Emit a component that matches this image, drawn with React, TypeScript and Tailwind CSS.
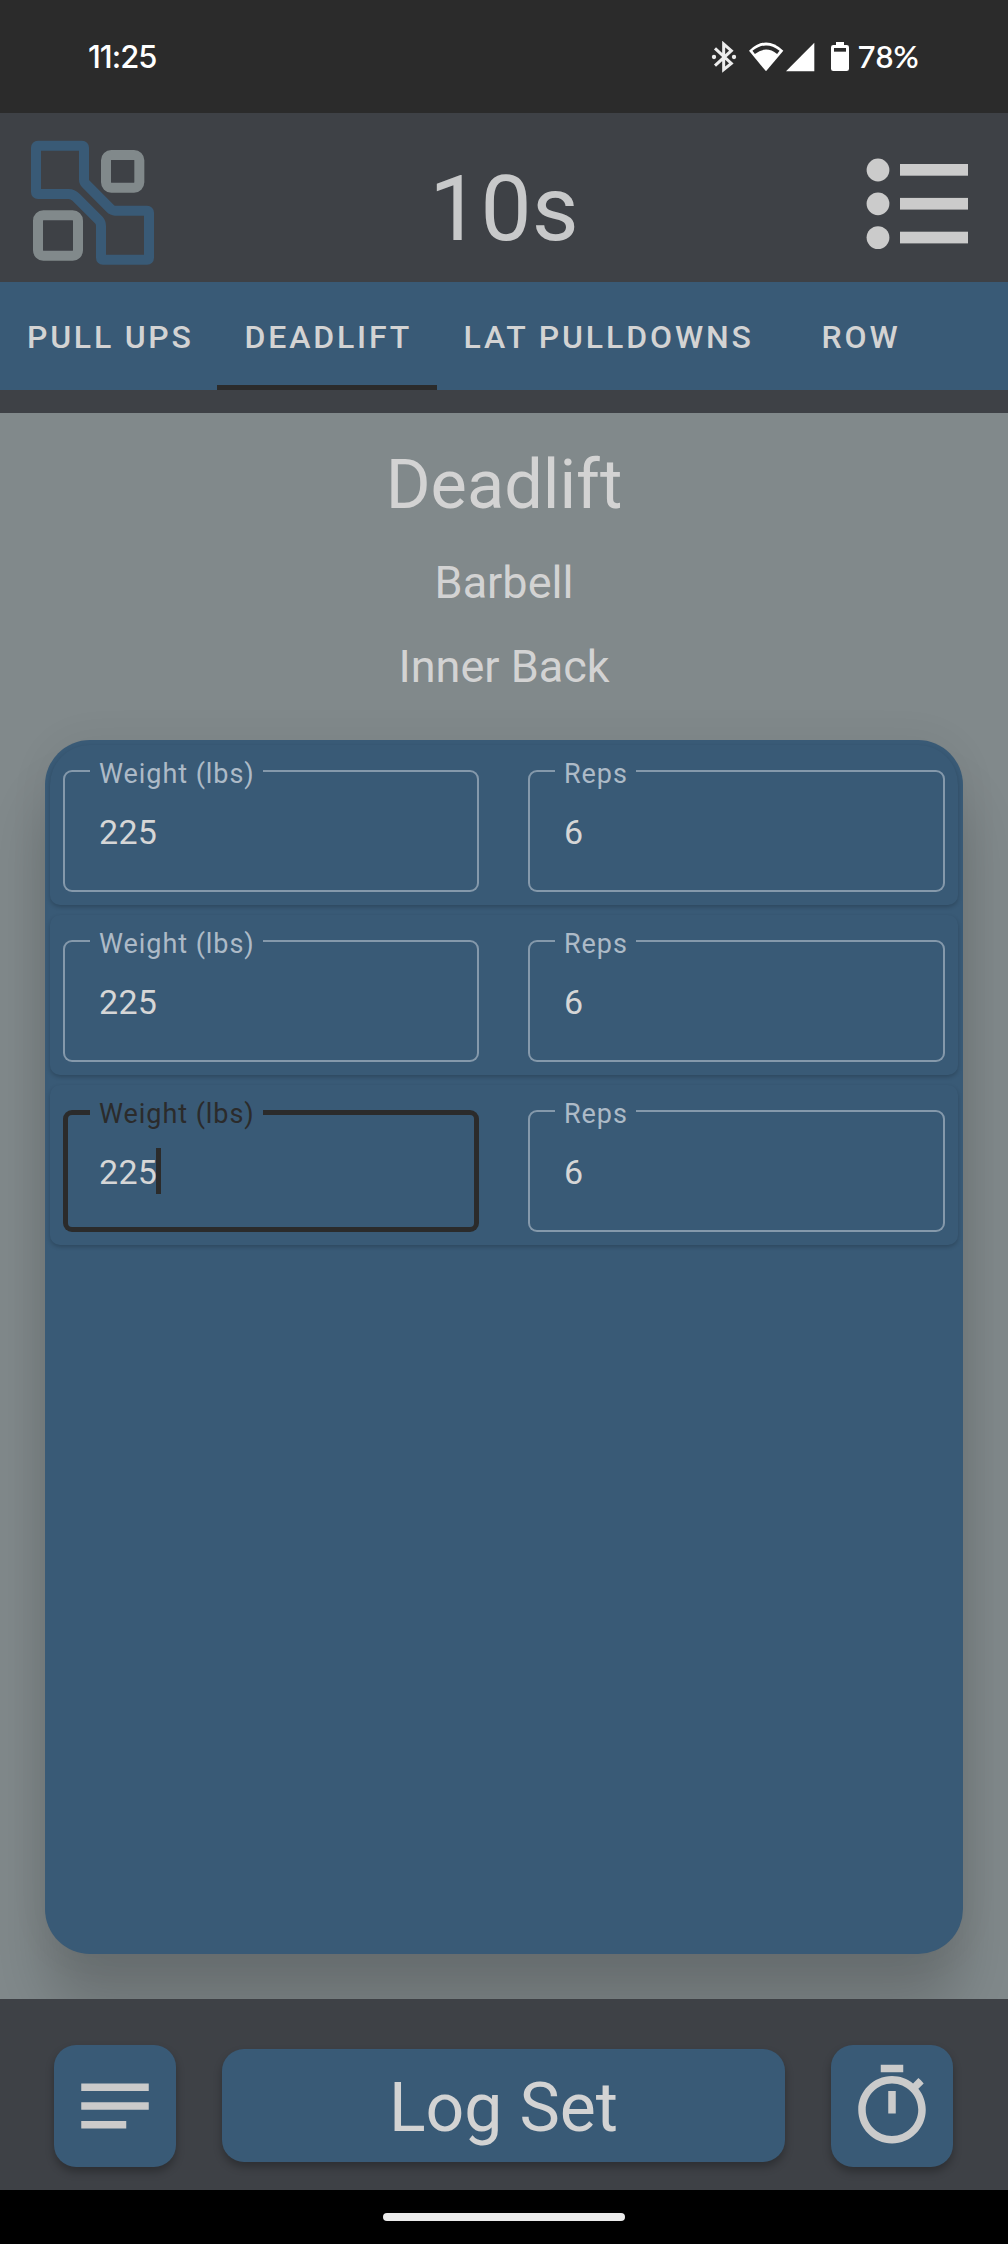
type FieldProps = { label: string; value: string; labelWidth: string; width: string; focused?: boolean };

const tabs = [
  { name: 'PULL UPS', box: 'w-[217px] pl-[27px] tracking-[2.75px]' },
  { name: 'DEADLIFT', box: 'w-[220px] pl-[27.5px] tracking-[2.85px]', active: true },
  { name: 'LAT PULLDOWNS', box: 'w-[345px] pl-[26.5px] tracking-[2.9px]' },
  { name: 'ROW', box: 'w-[226px] pl-[39.5px] tracking-[2.9px]' },
];

const sets = [
  { weight: '225', reps: '6' },
  { weight: '225', reps: '6' },
  { weight: '225', reps: '6', focused: true },
];

function Logo() {
  return (
    <svg width="123" height="125" viewBox="93 420 369 375" fill="none" strokeWidth="30">
      <path
        stroke="#395a76"
        strokeLinejoin="round"
        d="M114 437H246Q252 437 252 443V538Q252 546 257 551L330 625Q337 632 345 632H441Q447 632 447 638V773Q447 779 441 779H309Q303 779 303 773V678Q303 668 297 661L228 592Q218 582 206 582H114Q108 582 108 576V443Q108 437 114 437Z"
      />
      <rect x="318" y="465" width="100" height="98" rx="16" stroke="#81898b" />
      <rect x="114" y="646" width="120" height="121" rx="16" stroke="#81898b" />
    </svg>
  );
}

function StatusIcons() {
  return (
    <>
      <svg className="absolute left-[711px] top-[41px]" width="27" height="32" viewBox="621 123 81 96">
        <path d="M633 145L682 190L659 209V132L682 152L633 197" fill="none" stroke="#ececec" strokeWidth="9" />
        <circle cx="630" cy="171" r="6.5" fill="#ececec" />
        <circle cx="690" cy="171" r="6.5" fill="#ececec" />
      </svg>
      <svg className="absolute left-[748px] top-[41px]" width="36" height="32" viewBox="732 123 108 96">
        <path d="M735 152Q786 103 838 152L786 214Z" fill="#fff" />
        <path d="M749 157Q786 128 823 157" fill="none" stroke="#2b2b2b" strokeWidth="12" />
      </svg>
      <svg className="absolute left-[785px] top-[41px]" width="31" height="32" viewBox="843 123 93 96">
        <path d="M846 214H931V128Z" fill="#fff" />
      </svg>
      <svg className="absolute left-[830px] top-[41px]" width="20" height="32" viewBox="978 123 60 96">
        <rect x="996" y="126" width="24" height="12" fill="#fff" />
        <rect x="981" y="135" width="54" height="78" rx="7" fill="#fff" />
        <rect x="990" y="144" width="36" height="11" fill="#2b2b2b" />
      </svg>
    </>
  );
}

function ListIcon() {
  return (
    <svg width="102" height="92" viewBox="0 0 102 92" fill="#cbcbcb">
      <circle cx="12" cy="12" r="11.4" />
      <circle cx="12" cy="45.8" r="11.4" />
      <circle cx="12" cy="79.6" r="11.4" />
      <rect x="34" y="6" width="68" height="11.7" />
      <rect x="34" y="39.9" width="68" height="11.7" />
      <rect x="34" y="73.7" width="68" height="11.7" />
    </svg>
  );
}

function Field({ label, value, labelWidth, width, focused }: FieldProps) {
  return (
    <div
      className={`relative h-[122px] rounded-[9px] pl-9 pt-[42px] ${width} ${
        focused ? 'shadow-[inset_0_0_0_5px_#2b2b2b]' : 'shadow-[inset_0_0_0_2px_#8599ab]'
      }`}
    >
      <span
        className={`absolute -top-3 left-[27px] h-8 whitespace-nowrap bg-[#395a76] pl-[9px] text-[27px] leading-8 tracking-[0.95px] ${labelWidth} ${
          focused ? 'text-[#2b2b2b]' : 'text-[#adbac7]'
        }`}
      >
        {label}
      </span>
      <div className="text-[34px] leading-10 tracking-[0.3px] text-[#d6d6d6]">{value}</div>
      {focused && <span className="absolute left-[93px] top-[38px] h-[46px] w-[5px] bg-[#2b2b2b]" />}
    </div>
  );
}

export default function App() {
  return (
    <div className="flex h-[2244px] w-[1008px] flex-col overflow-hidden bg-[#3e4146] font-[Roboto,sans-serif] text-[#d3d3d3]">
      <div className="relative h-[113px] shrink-0 bg-[#2b2b2b] text-white">
        <span className="absolute left-[88px] top-[39px] font-[Inter,sans-serif] text-[31px] font-medium leading-9 tracking-[-1px]">
          11:25
        </span>
        <StatusIcons />
        <span className="absolute left-[857.5px] top-[38px] font-[Lato,sans-serif] text-[31px] font-semibold leading-9">78%</span>
      </div>

      <header className="flex h-[169px] shrink-0 items-start justify-between pl-[31px] pr-10">
        <div className="w-[200px] pt-[27px]">
          <Logo />
        </div>
        <h1 className="pl-[9px] pt-[22px] text-[91px] leading-[148px] text-[#c8c9ca]">10s</h1>
        <div className="flex w-[200px] justify-end pt-[44.7px]">
          <ListIcon />
        </div>
      </header>

      <nav className="flex h-[108px] shrink-0 bg-[#395a76]">
        {tabs.map((tab) => (
          <div
            key={tab.name}
            className={`h-[108px] shrink-0 whitespace-nowrap pt-px text-[32px] font-medium leading-[108px] ${tab.box} ${
              tab.active ? 'shadow-[inset_0_-5px_0_#2b2b2b]' : ''
            }`}
          >
            {tab.name}
          </div>
        ))}
      </nav>

      <main className="mt-[23px] flex h-[1586px] shrink-0 flex-col items-center overflow-hidden bg-[#81898b] pt-[37px]">
        <h2 className="text-[68.5px] leading-[70px]">Deadlift</h2>
        <p className="mt-[37px] text-[45px] leading-[52px]">Barbell</p>
        <p className="mt-8 text-[45px] leading-[52px]">Inner Back</p>
        <section className="mt-[47px] flex h-[1214px] w-[918px] shrink-0 flex-col gap-2.5 rounded-[45px] bg-[#395a76] p-[5px] shadow-[0_55px_56px_rgba(0,0,0,0.18),0_0_40px_rgba(0,0,0,0.06)]">
          {sets.map((set, i) => (
            <div
              key={i}
              className={`flex h-40 justify-between px-[13px] pt-[25px] shadow-[0_2px_4px_rgba(0,0,0,0.2)] ${
                i === 0 ? 'rounded-b-[10px] rounded-t-[40px]' : 'rounded-[10px]'
              }`}
            >
              <Field label="Weight (lbs)" value={set.weight} width="w-[416px]" labelWidth="w-[173px]" focused={set.focused} />
              <Field label="Reps" value={set.reps} width="w-[417px]" labelWidth="w-[81px]" />
            </div>
          ))}
        </section>
      </main>

      <footer className="flex h-[191px] shrink-0 items-start justify-between pl-[54px] pr-[55px] pt-[46px]">
        <button className="flex size-[122px] items-center justify-center rounded-[22px] bg-[#395a76] shadow-[0_5px_9px_rgba(0,0,0,0.28)]">
          <svg width="90" height="90" viewBox="0 0 24 24" fill="#cbcbcb">
            <path d="M3 18h12v-2H3v2zM3 6v2h18V6H3zm0 7h18v-2H3v2z" />
          </svg>
        </button>
        <button className="mt-1 h-[113px] w-[563px] rounded-[22px] bg-[#395a76] pt-1.5 text-[68px] leading-[107px] shadow-[0_5px_9px_rgba(0,0,0,0.28)]">
          Log Set
        </button>
        <button className="flex size-[122px] items-center justify-center rounded-[22px] bg-[#395a76] shadow-[0_5px_9px_rgba(0,0,0,0.28)]">
          <svg width="90" height="90" viewBox="0 0 24 24" fill="#cbcbcb">
            <path d="M15 1H9v2h6V1zm-4 13h2V8h-2v6zm8.03-6.61l1.42-1.42c-.43-.51-.9-.99-1.41-1.41l-1.42 1.42C16.07 4.74 14.12 4 12 4c-4.97 0-9 4.03-9 9s4.02 9 9 9 9-4.03 9-9c0-2.12-.74-4.07-1.97-5.61zM12 20c-3.87 0-7-3.13-7-7s3.13-7 7-7 7 3.13 7 7-3.13 7-7 7z" />
          </svg>
        </button>
      </footer>

      <div className="flex h-[54px] shrink-0 justify-center bg-black pt-[23px]">
        <div className="h-2 w-[242px] rounded-full bg-[#ececec]" />
      </div>
    </div>
  );
}
